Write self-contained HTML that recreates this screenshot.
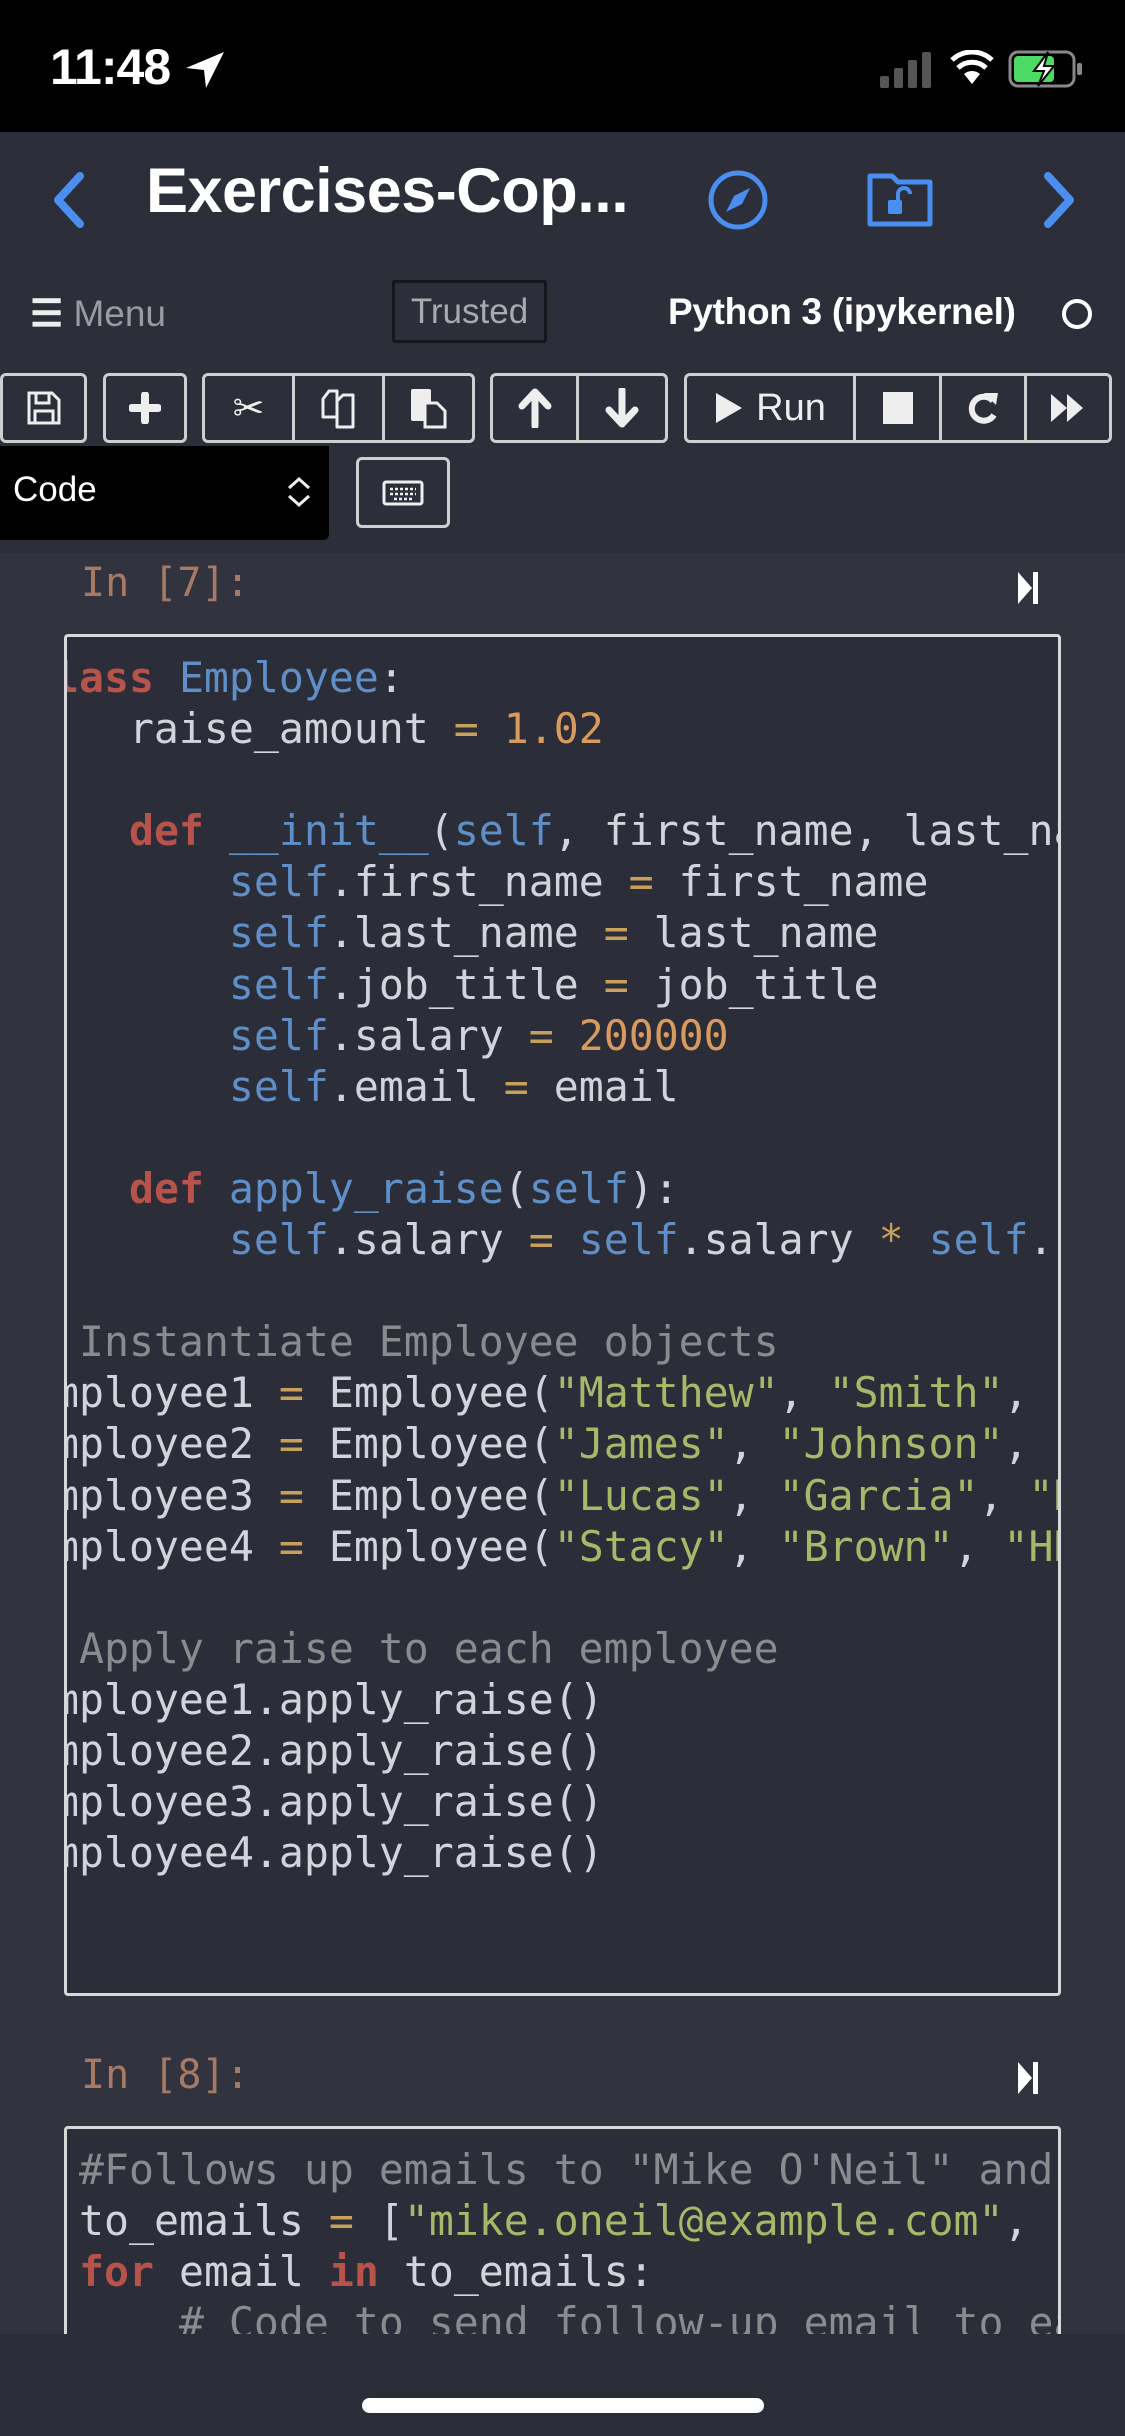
<!DOCTYPE html>
<html><head><meta charset="utf-8"><style>
*{margin:0;padding:0;box-sizing:border-box}
body{width:1125px;height:2436px;background:#2c2e3a;position:relative;overflow:hidden;font-family:"Liberation Sans",sans-serif}
.a{position:absolute}
.btn{position:absolute;top:373px;height:70px;border:3px solid #cfcfcf;border-radius:6px;display:flex}
.btn div{height:100%;border-right:3px solid #cfcfcf;display:flex;align-items:center;justify-content:center;color:#eee}
.btn div:last-child{border-right:none}
pre{position:absolute;font-family:"DejaVu Sans Mono","Liberation Mono",monospace;font-size:41.5px;line-height:51.1px;color:#d3d3de;white-space:pre}
.k{color:#b8534b;font-weight:bold}.b{color:#5f8fc6}.n{color:#d99b5d}.o{color:#c9a05a}.s{color:#a9b768}.c{color:#8a8a8f}
.code{position:absolute;left:64px;width:997px;border:3px solid #d8d8d8;border-radius:4px;background:#2b2d39;overflow:hidden}
.prompt{position:absolute;left:81px;font-family:"DejaVu Sans Mono",monospace;font-size:40px;color:#a97a63}
</style></head><body>
<div class="a" style="left:0;top:0;width:1125px;height:132px;background:#000"></div>
<div class="a" style="left:50px;top:38px;color:#fff;font-weight:bold;font-size:50px;letter-spacing:-1px">11:48</div>
<svg class="a" style="left:184px;top:50px" width="44" height="40" viewBox="0 0 44 40"><path d="M40 2 L2 18 L20 20 L22 38 Z" fill="#fff"/></svg>
<svg class="a" style="left:880px;top:52px" width="54" height="36"><rect x="0" y="24" width="9" height="12" rx="2" fill="#555"/><rect x="14" y="16" width="9" height="20" rx="2" fill="#555"/><rect x="28" y="8" width="9" height="28" rx="2" fill="#555"/><rect x="42" y="0" width="9" height="36" rx="2" fill="#555"/></svg>
<svg class="a" style="left:950px;top:50px" width="44" height="36" viewBox="0 0 44 36"><path d="M22 34 L14 24 A12 12 0 0 1 30 24 Z" fill="#fff"/><path d="M8 18 A20 20 0 0 1 36 18" stroke="#fff" stroke-width="5" fill="none"/><path d="M2 10 A29 29 0 0 1 42 10" stroke="#fff" stroke-width="5" fill="none"/></svg>
<svg class="a" style="left:1008px;top:50px" width="76" height="38"><rect x="2" y="2" width="64" height="34" rx="8" stroke="#888" stroke-width="3" fill="none"/><rect x="6" y="6" width="40" height="26" rx="4" fill="#4cd964"/><rect x="69" y="13" width="5" height="12" rx="2" fill="#888"/><path d="M40 2 L26 21 L36 21 L30 36 L46 16 L36 16 Z" fill="#fff" stroke="#000" stroke-width="2"/></svg>
<svg class="a" style="left:48px;top:172px" width="40" height="56"><path d="M32 4 L10 28 L32 52" stroke="#4a8ef0" stroke-width="8" fill="none" stroke-linecap="round" stroke-linejoin="round"/></svg>
<div class="a" style="left:146px;top:155px;color:#fff;font-weight:bold;font-size:63px;letter-spacing:-0.5px">Exercises-Cop...</div>
<svg class="a" style="left:706px;top:168px" width="64" height="64"><circle cx="32" cy="32" r="27" stroke="#4a8ef0" stroke-width="5" fill="none"/><path d="M44 20 L36 36 L20 44 L28 28 Z" fill="#4a8ef0"/></svg>
<svg class="a" style="left:866px;top:170px" width="70" height="58"><path d="M4 6 H26 L32 12 H64 V54 H4 Z" stroke="#4a8ef0" stroke-width="5" fill="none" stroke-linejoin="round"/><rect x="22" y="30" width="14" height="14" rx="2" fill="#4a8ef0"/><path d="M32 30 V24 A6 6 0 0 1 44 24" stroke="#4a8ef0" stroke-width="4" fill="none"/></svg>
<svg class="a" style="left:1040px;top:172px" width="40" height="56"><path d="M8 4 L30 28 L8 52" stroke="#4a8ef0" stroke-width="8" fill="none" stroke-linecap="round" stroke-linejoin="round"/></svg>
<div class="a" style="left:30px;top:292px;color:#9a9aa0;font-size:37px"><span style="color:#eee;font-weight:bold">☰</span> Menu</div>
<div class="a" style="left:392px;top:280px;width:155px;height:63px;border:3px solid #15161c;border-radius:3px;color:#a9a9ae;font-size:35px;text-align:center;line-height:57px">Trusted</div>
<div class="a" style="left:668px;top:291px;color:#fff;font-weight:bold;font-size:37px;letter-spacing:-0.3px">Python 3 (ipykernel)</div>
<div class="a" style="left:1062px;top:299px;width:30px;height:30px;border:4px solid #fff;border-radius:50%"></div>
<div class="btn" style="left:0;width:87px"><div style="width:81px"><svg width="36" height="36"><path d="M3 3 H26 L33 10 V33 H3 Z" stroke="#eee" stroke-width="3" fill="none"/><rect x="10" y="3" width="13" height="10" stroke="#eee" stroke-width="3" fill="none"/><rect x="9" y="21" width="18" height="12" stroke="#eee" stroke-width="3" fill="none"/></svg></div></div>
<div class="btn" style="left:103px;width:84px"><div style="width:78px"><svg width="32" height="32"><path d="M16 3 V29 M3 16 H29" stroke="#eee" stroke-width="8" stroke-linecap="round"/></svg></div></div>
<div class="btn" style="left:202px;width:273px"><div style="width:90px;font-size:38px">✂</div><div style="width:90px"><svg width="40" height="42"><path d="M4 12 L10 4 H18 V30 H4 Z M18 14 L24 8 H34 V40 H18 Z" stroke="#eee" stroke-width="3" fill="none" stroke-linejoin="round"/></svg></div><div style="width:87px"><svg width="40" height="42"><rect x="2" y="2" width="20" height="32" rx="2" fill="#eee"/><path d="M16 16 H28 L36 24 V40 H16 Z" fill="#2c2e3a" stroke="#eee" stroke-width="3"/></svg></div></div>
<div class="btn" style="left:490px;width:178px"><div style="width:86px"><svg width="34" height="40"><path d="M17 38 V6 M4 18 L17 4 L30 18" stroke="#eee" stroke-width="7" fill="none" stroke-linecap="round" stroke-linejoin="round"/></svg></div><div style="width:86px"><svg width="34" height="40"><path d="M17 2 V34 M4 22 L17 36 L30 22" stroke="#eee" stroke-width="7" fill="none" stroke-linecap="round" stroke-linejoin="round"/></svg></div></div>
<div class="btn" style="left:684px;width:428px"><div style="width:169px;font-size:38px;gap:12px"><svg width="30" height="34"><path d="M2 2 L28 17 L2 32 Z" fill="#eee"/></svg>Run</div><div style="width:86px"><div style="width:30px;height:32px;background:#eee;border:none"></div></div><div style="width:85px"><svg width="34" height="38"><path d="M27 12 A12 12 0 1 0 28 26" stroke="#eee" stroke-width="6" fill="none"/><path d="M18 4 L32 4 L30 16 Z" fill="#eee"/></svg></div><div style="width:82px"><svg width="38" height="32"><path d="M2 2 L18 16 L2 30 Z M18 2 L34 16 L18 30 Z" fill="#eee"/></svg></div></div>
<div class="a" style="left:0;top:446px;width:329px;height:94px;background:#000;border-radius:0 0 6px 0"></div>
<div class="a" style="left:13px;top:470px;color:#fff;font-size:35px">Code</div>
<svg class="a" style="left:286px;top:476px" width="26" height="32"><path d="M3 12 L13 3 L23 12 M3 20 L13 29 L23 20" stroke="#eee" stroke-width="3" fill="none"/></svg>
<div class="a" style="left:356px;top:457px;width:94px;height:71px;border:3px solid #cfcfcf;border-radius:6px;display:flex;align-items:center;justify-content:center"><svg width="42" height="26"><rect x="2" y="2" width="38" height="22" rx="2" stroke="#eee" stroke-width="3" fill="none"/><path d="M8 9 H34 M8 14 H34 M12 19 H30" stroke="#eee" stroke-width="2.5" stroke-dasharray="3 2"/></svg></div>
<div class="a" style="left:0;top:553px;width:1125px;height:1781px;background:#31333f"></div>
<div class="prompt" style="top:560px">In [7]:</div>
<svg class="a" style="left:1018px;top:570px" width="22" height="36"><path d="M0 2 L14 18 L0 34 Z" fill="#fff"/><rect x="15" y="2" width="5" height="32" fill="#fff"/></svg>
<div class="code" style="top:634px;height:1362px">
<pre style="left:-38px;top:15px"><span class="k">class</span> <span class="b">Employee</span>:
    raise_amount <span class="o">=</span> <span class="n">1.02</span>

    <span class="k">def</span> <span class="b">__init__</span>(<span class="b">self</span>, first_name, last_name, job_title, email):
        <span class="b">self</span>.first_name <span class="o">=</span> first_name
        <span class="b">self</span>.last_name <span class="o">=</span> last_name
        <span class="b">self</span>.job_title <span class="o">=</span> job_title
        <span class="b">self</span>.salary <span class="o">=</span> <span class="n">200000</span>
        <span class="b">self</span>.email <span class="o">=</span> email

    <span class="k">def</span> <span class="b">apply_raise</span>(<span class="b">self</span>):
        <span class="b">self</span>.salary <span class="o">=</span> <span class="b">self</span>.salary <span class="o">*</span> <span class="b">self</span>.raise_amount

<span class="c"># Instantiate Employee objects</span>
employee1 <span class="o">=</span> Employee(<span class="s">"Matthew"</span>, <span class="s">"Smith"</span>, <span class="s">"Manager"</span>)
employee2 <span class="o">=</span> Employee(<span class="s">"James"</span>, <span class="s">"Johnson"</span>, <span class="s">"Dev"</span>)
employee3 <span class="o">=</span> Employee(<span class="s">"Lucas"</span>, <span class="s">"Garcia"</span>, <span class="s">"Dev"</span>)
employee4 <span class="o">=</span> Employee(<span class="s">"Stacy"</span>, <span class="s">"Brown"</span>, <span class="s">"HR"</span>)

<span class="c"># Apply raise to each employee</span>
employee1.apply_raise()
employee2.apply_raise()
employee3.apply_raise()
employee4.apply_raise()</pre>
</div>
<div class="prompt" style="top:2052px">In [8]:</div>
<svg class="a" style="left:1018px;top:2060px" width="22" height="36"><path d="M0 2 L14 18 L0 34 Z" fill="#fff"/><rect x="15" y="2" width="5" height="32" fill="#fff"/></svg>
<div class="code" style="top:2126px;height:260px">
<pre style="left:12px;top:15px"><span class="c">#Follows up emails to "Mike O'Neil" and others</span>
to_emails <span class="o">=</span> [<span class="s">"mike.oneil@example.com"</span>, <span class="s">"x@example.com"</span>]
<span class="k">for</span> email <span class="k">in</span> to_emails:
    <span class="c"># Code to send follow-up email to each</span></pre>
</div>
<div class="a" style="left:0;top:2334px;width:1125px;height:102px;background:#2b2d39"></div>
<div class="a" style="left:362px;top:2398px;width:402px;height:15px;background:#fff;border-radius:8px"></div>
</body></html>
